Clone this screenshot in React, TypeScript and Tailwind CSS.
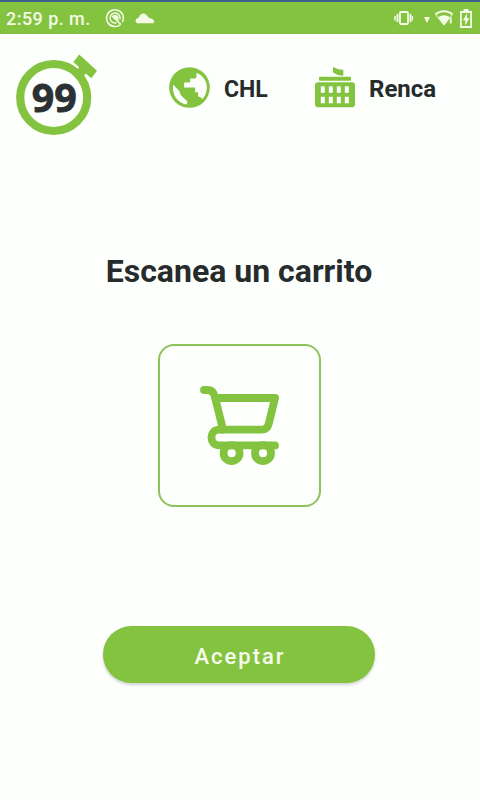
function StatusBar() {
  return (
    <div className="flex h-[34px] items-center justify-between border-t-2 border-[#40608c] bg-[#84c340] pr-2 pl-1.5 text-[#f3fae6]">
      <div className="flex items-center">
        <span className="w-[99px] pt-0.5 text-[18px] leading-5 font-medium tracking-[0.45px] whitespace-nowrap">
          2:59 p. m.
        </span>
        <svg className="h-5 w-5" viewBox="0 0 20 20" fill="none" stroke="currentColor">
          <path d="M15.500 16.500A8.400 8.400 0 1 1 18.400 10c0 1.600-.4 3-1 4" strokeWidth="1.600" />
          <path d="M14.800 11.500A5 5 0 1 0 11.500 14.800" strokeWidth="1.400" />
          <path d="M6.500 8.500C9 5.500 13 6.500 13.500 9.500v4Z" fill="currentColor" stroke="none" />
          <path d="m8 9 8 7.500" strokeWidth="1.600" />
        </svg>
        <svg className="ml-2.5 h-3 w-5" viewBox="0 0 20 12" fill="currentColor">
          <path d="M3 11.300c-3.500 0-3.200-5 .5-5.300C5 1.500 9 0 12 3.500c1 1.500 2 2.500 4 3 4 .8 4 4.800 1 4.800Z" />
        </svg>
      </div>
      <div className="flex items-center">
        <svg className="mr-px h-4 w-5" viewBox="0 0 20 16" fill="none" stroke="currentColor">
          <rect x="7" y="2" width="8" height="12" rx="1" strokeWidth="1.800" />
          <path d="M4.500 4v8M17.500 4v8" strokeWidth="1.900" />
          <path d="M2 6v4.500M19.500 6v4.500" strokeWidth="1.500" />
        </svg>
        <svg className="mt-1 ml-2.5 h-1.5 w-1.5" viewBox="0 0 6 6" fill="currentColor">
          <path d="M0 0h6L3 6Z" />
        </svg>
        <svg className="ml-1 h-4 w-5" viewBox="0 0 20 16" fill="none">
          <path d="M1.500 4.500C6 .2 14 .2 18.500 4.500" stroke="currentColor" strokeWidth="2" />
          <path d="M2 5l8 10 8-10" stroke="currentColor" strokeWidth="1" />
          <path d="M4 7.500c3.500-3 8.500-3 12 0L10 15.500Z" fill="currentColor" />
          <path d="M15.500 7.500h2.500v6h-2.500Z" fill="currentColor" opacity="0.75" />
        </svg>
        <svg className="ml-1.5 h-[19px] w-3" viewBox="0 0 12 19">
          <path d="M3.500 0h5v2H12v17H0V2h3.500Z" fill="currentColor" />
          <path d="M1.800 4h8.400v13H1.800Z" fill="#84c340" />
          <path d="M7 4.500 2.800 11.200h2.400v5.300L9.400 9.300H7Z" fill="currentColor" />
        </svg>
      </div>
    </div>
  );
}

function Logo() {
  return (
    <svg className="h-[86px] w-[84px]" viewBox="15 51 84 86">
      <circle cx="53.700" cy="97.500" r="33.500" fill="none" stroke="#84c340" strokeWidth="8.200" />
      <path
        d="M79.200 54.500 97 70.700l-5.700 7.600-5.500-4.800-4.600 5.500-6.700-6 4.600-5.800-5.700-5.200Z"
        fill="#84c340"
      />
      <text
        x="54.200"
        y="112.200"
        textAnchor="middle"
        fontFamily="'Open Sans', sans-serif"
        fontSize="40"
        fontWeight="700"
        textLength="45"
        lengthAdjust="spacingAndGlyphs"
        fill="#2a3033"
        stroke="#2a3033"
        strokeWidth="0.800"
      >
        99
      </text>
    </svg>
  );
}

function GlobeIcon() {
  return (
    <svg className="h-[49px] w-[49px]" viewBox="4.500 1.500 147 147">
      <circle cx="78" cy="75" r="61" fill="#84c340" />
      <g fill="#fdfffc">
        <path d="M29 66 48 86c1 8 5 13 10 18l12 11c2 4 1 9-1 11C44 122 24 98 29 66Z" />
        <path d="M62 60h18V48h15c3 0 4-2 4-5V31c20 8 31 25 31 44 0 14-5 26-14 35-3-5-6-8-12-8V89h-9V75H62Z" />
      </g>
    </svg>
  );
}

const WINDOW_COLUMNS = [5.8, 13.8, 21.8, 29.8];
const WINDOW_ROWS = [19.3, 29.8];

function BuildingIcon() {
  return (
    <svg className="h-[41px] w-10" viewBox="0 0 40 41" fill="#84c340">
      <path d="M18 0l5.500 2.300 4.800.4v6l-4.800-.4L18 5.500Z" />
      <rect x="4" y="9.700" width="32" height="4" rx="0.800" />
      <rect x="0" y="15.200" width="40" height="25" rx="3" />
      {WINDOW_ROWS.map((y) =>
        WINDOW_COLUMNS.map((x) => (
          <rect key={`${x}-${y}`} x={x} y={y} width="4" height="6.500" fill="#fdfffc" />
        ))
      )}
    </svg>
  );
}

function CartIcon() {
  return (
    <svg
      className="h-20 w-20"
      viewBox="198.700 385.500 80 80"
      fill="none"
      stroke="#84c340"
      strokeWidth="7.800"
      strokeLinecap="round"
      strokeLinejoin="round"
    >
      <path d="M203.700 389.500h3.300c4 0 6.500 2.500 7.500 6.500l8.200 33" />
      <path d="M215 397.500h59.800l-6.300 25.500c-1 4-3 6.200-7 6.200H219c-10.500 0-10.500 15.700 0 15.700h55.700" />
      <circle cx="231.300" cy="452.700" r="8" />
      <circle cx="262.700" cy="452.700" r="8" />
    </svg>
  );
}

export default function App() {
  return (
    <div className="flex h-[800px] w-[480px] flex-col bg-[#fdfffc] font-[Roboto,sans-serif] text-[#262b2b]">
      <StatusBar />

      {/* Header */}
      <header className="flex h-[103px] pt-[17px] pl-[15px]">
        <Logo />
        <div className="ml-[66px] flex h-[72px] items-center">
          <GlobeIcon />
          <span className="ml-2.5 w-[91px] pt-[3px] text-[24px] font-bold">
            <span className="inline-block origin-left scale-x-[0.96]">CHL</span>
          </span>
          <BuildingIcon />
          <span className="ml-3.5 pt-[3px] text-[24px] font-bold">Renca</span>
        </div>
      </header>

      <main className="flex flex-1 flex-col items-center pr-0.5">
        <h1 className="mt-[114px] text-[32px] leading-10 font-bold whitespace-nowrap">
          Escanea un carrito
        </h1>
        <div className="mt-[53px] flex h-[163px] w-[163px] items-center justify-center rounded-[16px] border-2 border-[#8dc35a]">
          <CartIcon />
        </div>
        <button className="mt-[119px] h-[57px] w-[272px] rounded-full bg-[#84c340] pt-1 pl-0.5 text-[22px] font-medium tracking-[2px] text-[#f6fcec] shadow-[0_2px_3px_rgba(0,0,0,0.18)]">
          Aceptar
        </button>
      </main>
    </div>
  );
}
